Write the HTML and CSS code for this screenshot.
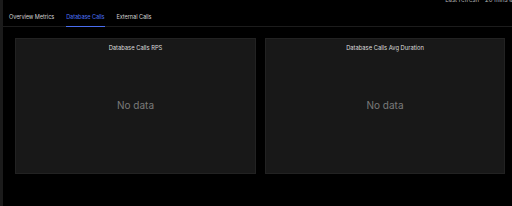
FILE: index.html
```html
<!DOCTYPE html>
<html>
<head>
<meta charset="utf-8">
<link rel="stylesheet" href="styles.css">
</head>
<body>
<div class="app">
  <div class="rail"></div>
  <main class="main">
    <div class="topbar"><span class="refresh">Last refresh - 20 mins ago</span></div>
    <nav class="tabs">
      <span class="tab">Overview Metrics</span>
      <span class="tab active">Database Calls</span>
      <span class="tab">External Calls</span>
    </nav>
    <section class="grid">
      <div class="panel">
        <div class="panel-title">Database Calls RPS</div>
        <div class="panel-body">No data</div>
      </div>
      <div class="panel">
        <div class="panel-title">Database Calls Avg Duration</div>
        <div class="panel-body">No data</div>
      </div>
    </section>
  </main>
</div>
</body>
</html>
```
FILE: styles.css
```css
html, body {
  margin: 0;
  padding: 0;
  background: #000;
  width: 512px;
  height: 206px;
  overflow: hidden;
  font-family: Inter, "Liberation Sans", sans-serif;
}
.app {
  display: flex;
  height: 206px;
}
.rail {
  width: 3px;
  flex: none;
  background: #1b1b1b;
}
.main {
  flex: 1;
  display: flex;
  flex-direction: column;
  min-width: 0;
}
.topbar {
  display: flex;
  justify-content: flex-end;
  height: 6px;
  margin-top: -4px;
  margin-right: -8px;
}
.refresh {
  font-size: 6px;
  line-height: 8px;
  color: #b5b5b5;
  white-space: nowrap;
}
.tabs {
  display: flex;
  gap: 12px;
  padding-left: 6px;
  margin-top: 11px;
  border-bottom: 1px solid #1c1c1c;
}
.tab {
  font-size: 5.6px;
  letter-spacing: -0.08px;
  line-height: 8px;
  color: #d0d0d0;
  padding: 0 0 5px;
  border-bottom: 1px solid transparent;
  margin-bottom: -1px;
}
.tab.active {
  color: #4a6ef0;
  border-bottom-color: #4a6ef0;
}
.grid {
  display: grid;
  grid-template-columns: 241px 240px;
  gap: 9px;
  margin-top: 11px;
  padding-left: 12px;
}
.panel {
  height: 136px;
  box-sizing: border-box;
  background: #181818;
  border: 1px solid #222;
  display: flex;
  flex-direction: column;
}
.panel-title {
  text-align: center;
  font-size: 5.8px;
  line-height: 8px;
  color: #dcdcdc;
  margin-top: 5px;
}
.panel-body {
  flex: 1;
  display: flex;
  align-items: center;
  justify-content: center;
  font-size: 10px;
  color: #7a7a7a;
  padding-bottom: 15px;
}
```
